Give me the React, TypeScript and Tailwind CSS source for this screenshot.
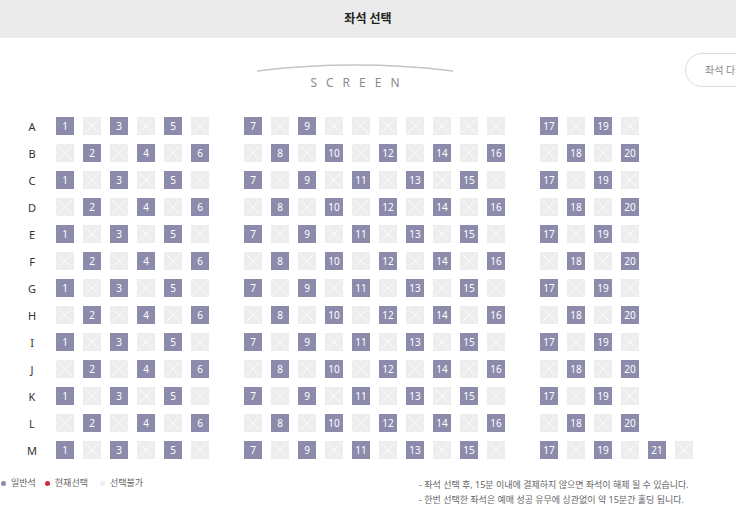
import React from "react";

const ROWS = ["A", "B", "C", "D", "E", "F", "G", "H", "I", "J", "K", "L", "M"];

function seatAvailable(row: number, n: number) {
  const odd = row % 2 === 0;
  if (odd && n % 2 === 0) return false;
  if (!odd && n % 2 === 1) return false;
  if (row === 0 && n >= 11 && n <= 16) return false;
  return true;
}

function Seat({ n, ok }: { n: number; ok: boolean }) {
  if (ok) {
    return (
      <div className="flex h-[18px] w-[18px] shrink-0 items-center justify-center bg-[#8d8bab] text-[10px] leading-none text-white">
        {n}
      </div>
    );
  }
  return (
    <div className="h-[18px] w-[18px] shrink-0 bg-[#ededed]">
      <svg width="18" height="18" viewBox="0 0 18 18">
        <line x1="2" y1="2" x2="16" y2="16" stroke="#fbfbfb" strokeWidth="1" />
        <line x1="16" y1="2" x2="2" y2="16" stroke="#fbfbfb" strokeWidth="1" />
      </svg>
    </div>
  );
}

function Section({ row, from, to }: { row: number; from: number; to: number }) {
  const seats = [];
  for (let n = from; n <= to; n++) {
    seats.push(<Seat key={n} n={n} ok={seatAvailable(row, n)} />);
  }
  return <div className="flex gap-[9px]">{seats}</div>;
}

export default function App() {
  return (
    <div
      className="h-[512px] w-[736px] overflow-hidden bg-white"
      style={{ fontFamily: '"Noto Sans", "Noto Sans CJK KR", sans-serif' }}
    >
      <div className="flex h-[38px] items-center justify-center bg-[#ebebeb]">
        <span className="text-[12px] font-bold text-[#222]">좌석 선택</span>
      </div>

      <div className="mt-[15px] flex items-start pl-[257px]">
        <div className="flex w-[196px] shrink-0 flex-col items-center pt-[10px]">
          <svg width="196" height="9" viewBox="0 0 196 9">
            <path d="M0 8 Q98 -4 196 8" fill="none" stroke="#c4c4c4" strokeWidth="1.6" />
          </svg>
          <span className="mt-[3px] pl-[9px] text-[12px] leading-[15px] tracking-[9px] text-[#8c8c8c]">
            SCREEN
          </span>
        </div>
        <button className="ml-[232px] flex h-[34px] w-[110px] shrink-0 items-center rounded-full border border-[#dcdcdc] bg-white pl-[19px] text-[10px] text-[#888]">
          좌석 다시 선택
        </button>
      </div>

      <div className="mt-[27px] flex flex-col gap-[9px] pl-[20px]">
        {ROWS.map((r, i) => (
          <div key={r} className="flex items-center">
            <div className="w-[24px] text-center text-[11px] leading-none text-[#333]">{r}</div>
            <div className="ml-[12px] flex gap-[9px]">
              <Section row={i} from={1} to={6} />
              <div className="w-[17px] shrink-0" />
              <Section row={i} from={7} to={16} />
              <div className="w-[17px] shrink-0" />
              <Section row={i} from={17} to={i === 12 ? 22 : 20} />
            </div>
          </div>
        ))}
      </div>

      <div className="mt-[18px] flex items-start">
        <div className="flex w-[419px] shrink-0 items-center gap-[5px] pl-[1px] text-[9px] leading-[12px] text-[#666]">
          <span className="h-[5px] w-[5px] rounded-full bg-[#8d8bab]" />
          <span>일반석</span>
          <span className="ml-[4px] h-[5px] w-[5px] rounded-full bg-[#d6243e]" />
          <span>현재선택</span>
          <span className="ml-[7px] h-[5px] w-[5px] rounded-full bg-[#efefef]" />
          <span>선택불가</span>
        </div>
        <div className="text-[9px] leading-[15px] text-[#666]">
          <p>- 좌석 선택 후, 15분 이내에 결제하지 않으면 좌석이 해제 될 수 있습니다.</p>
          <p>- 한번 선택한 좌석은 예매 성공 유무에 상관없이 약 15분간 홀딩 됩니다.</p>
        </div>
      </div>
    </div>
  );
}
